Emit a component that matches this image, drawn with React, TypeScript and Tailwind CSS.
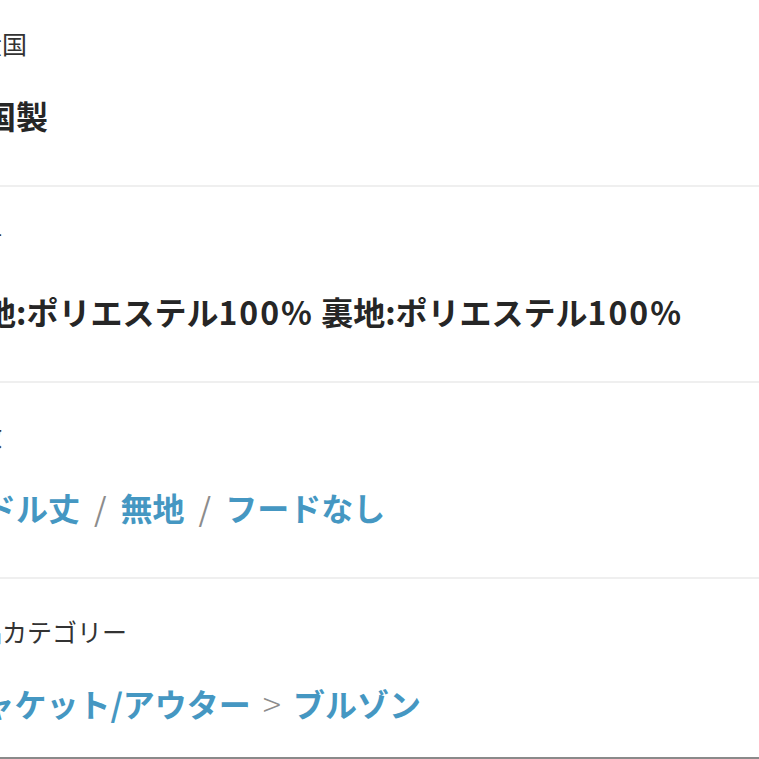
const jp = { fontFamily: '"Noto Sans CJK JP", "Noto Sans", sans-serif' };

function Section({ label, children, last }: { label: string; children: React.ReactNode; last?: boolean }) {
  return (
    <section
      className={
        "flex flex-col pt-[34px] " +
        (last ? "border-b-2 border-[#8a8a8a] pb-[32px]" : "border-b-2 border-[#efefef] pb-[48px]")
      }
    >
      <div className="ml-[-48px] whitespace-nowrap text-[25px] leading-[36px] text-[#333]">{label}</div>
      <div className="ml-[-48px] mt-[32px] whitespace-nowrap text-[32px] font-bold leading-[44px]">{children}</div>
    </section>
  );
}

const Link = ({ children }: { children: React.ReactNode }) => (
  <span className="text-[#4597c2]">{children}</span>
);

const Slash = () => <span className="mx-[14px] font-normal text-[#8c8c8c]">/</span>;

const Pct = () => <span className="tracking-[2px]">100%</span>;

export default function App() {
  return (
    <div className="h-[759px] w-[759px] overflow-hidden bg-white" style={jp}>
      <div className="mt-[-9px] flex flex-col">
        <Section label="生産国">
          <span className="text-[#262626]">中国製</span>
        </Section>
        <Section label="素材">
          <span className="text-[#262626]">
            表地:ポリエステル<Pct /> 裏地:ポリエステル<Pct />
          </span>
        </Section>
        <Section label="特徴">
          <Link>ミドル丈</Link>
          <Slash />
          <Link>無地</Link>
          <Slash />
          <Link>フードなし</Link>
        </Section>
        <Section label="商品カテゴリー" last>
          <Link>ジャケット/アウター</Link>
          <span className="mx-[12px] text-[34px] font-light leading-none text-[#8c8c8c]">&gt;</span>
          <Link>ブルゾン</Link>
        </Section>
      </div>
    </div>
  );
}
